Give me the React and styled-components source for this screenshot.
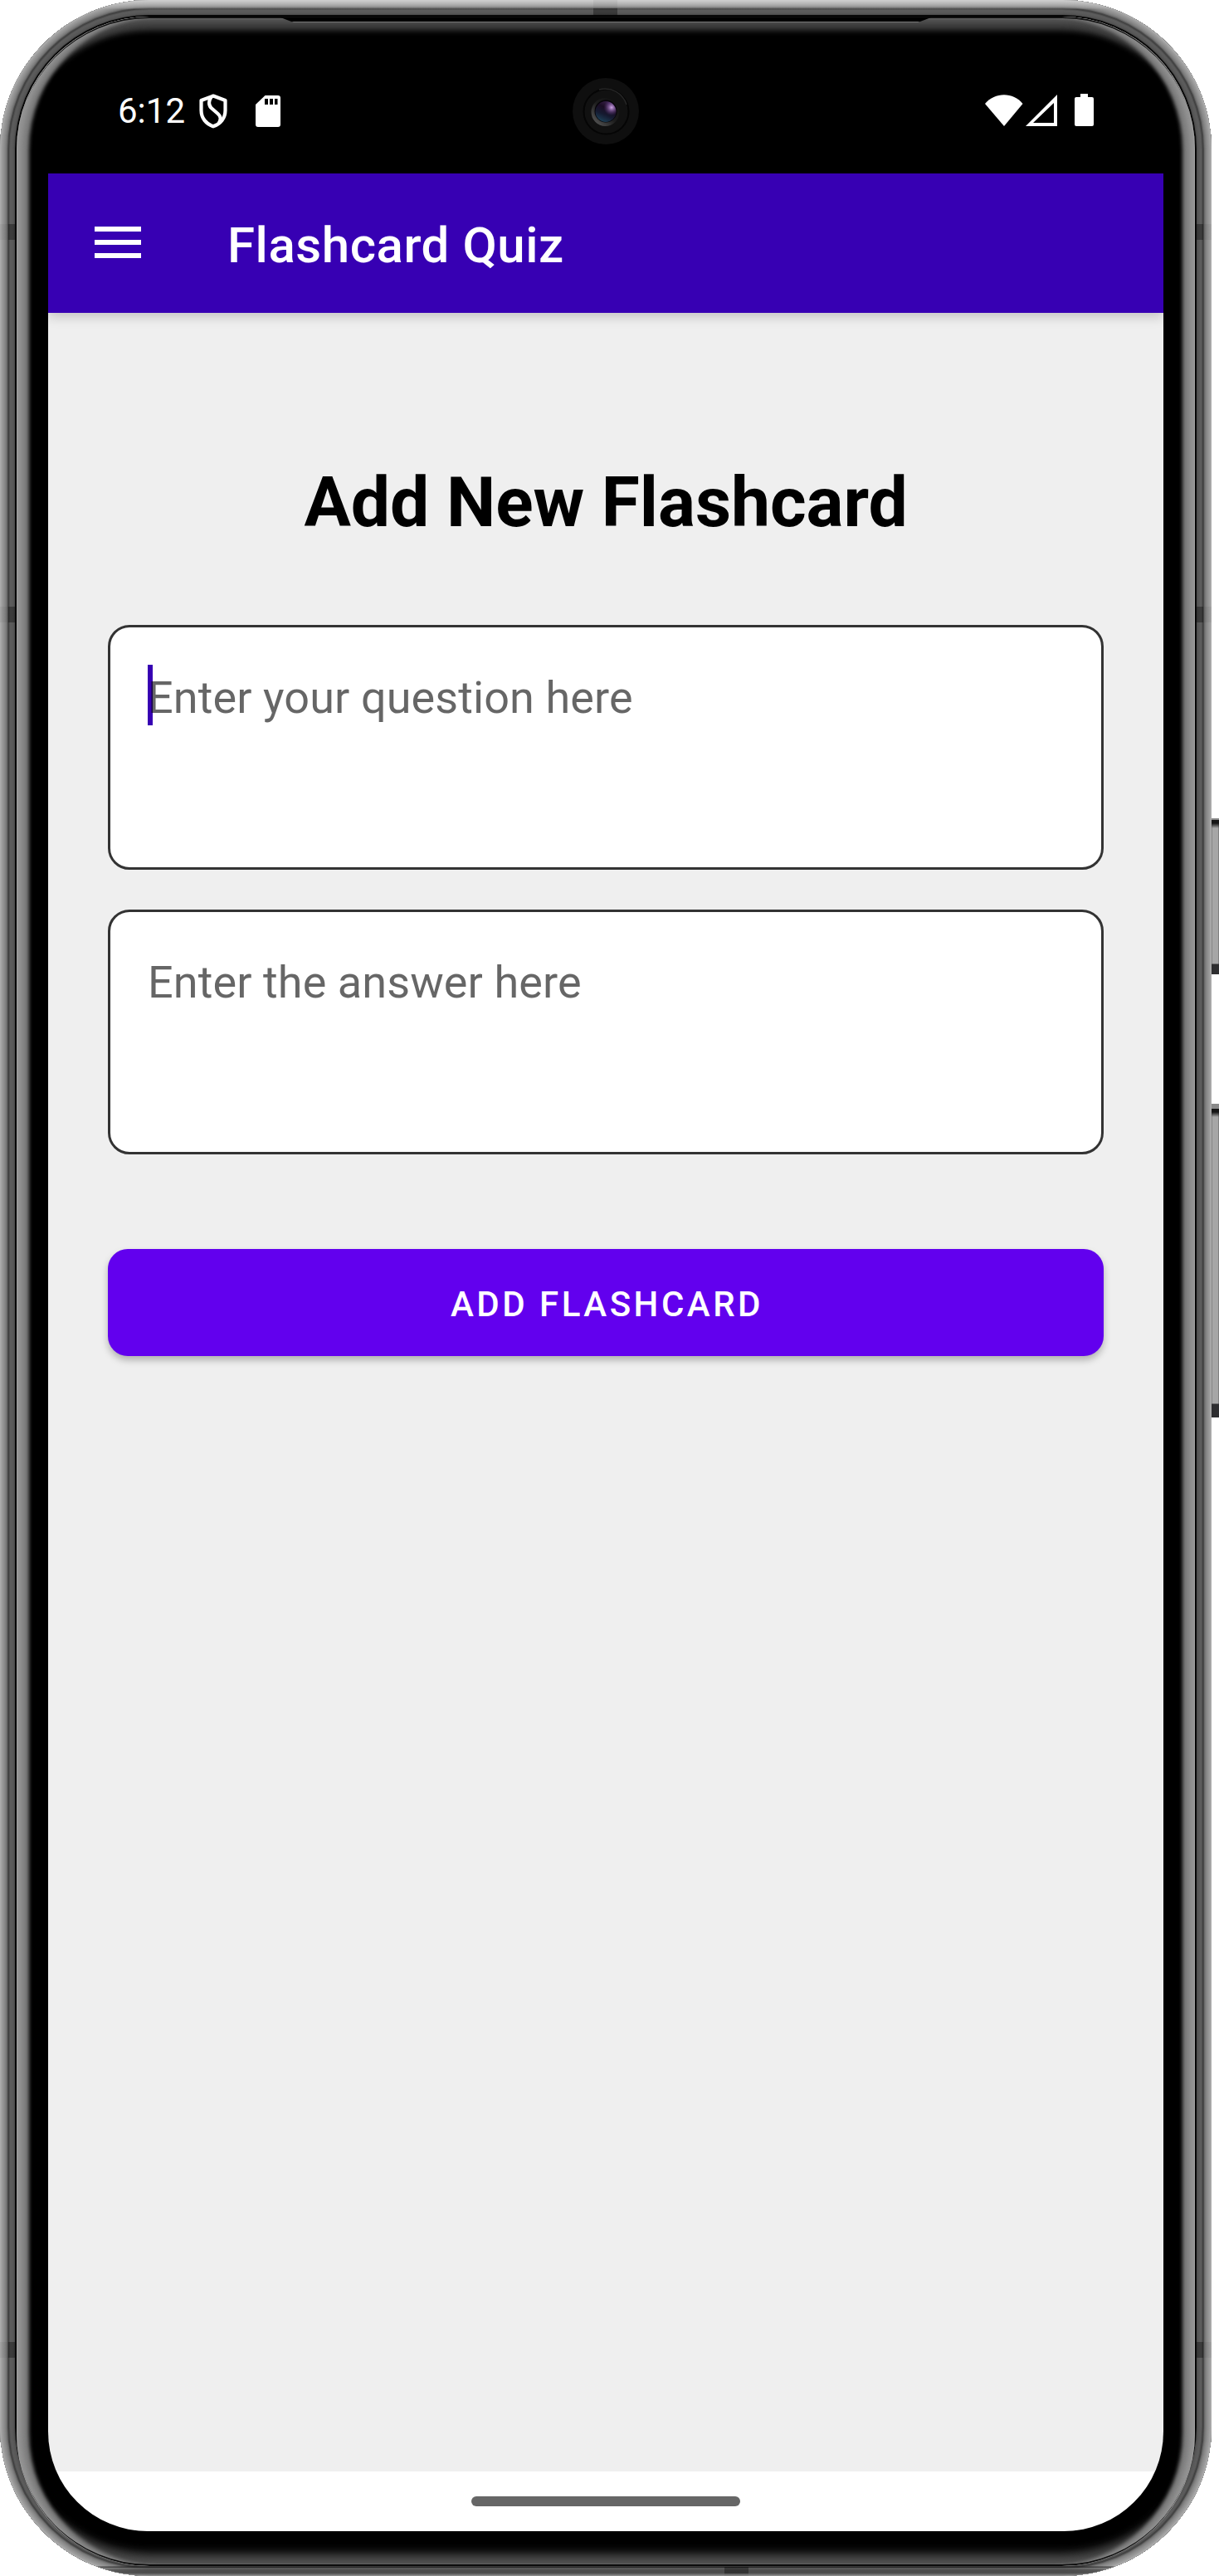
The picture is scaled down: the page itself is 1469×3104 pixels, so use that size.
import React from "react";
import styled, { createGlobalStyle } from "styled-components";

const Global = createGlobalStyle`
  * { box-sizing: border-box; }
  html, body { margin: 0; padding: 0; background: #fff; }
  body { font-family: Roboto, "Noto Sans", sans-serif; overflow: hidden; }
`;

/* Metal frame, one colour per pixel from the outer edge inwards */
const RIM = [
  "#acacac", "#a4a4a4", "#9c9c9c", "#969696", "#909090", "#8a8a8a", "#828282", "#787878", "#6a6a6a",
  "#4a4a4a", "#404040", "#525252", "#5c5c5c", "#5c5c5c", "#5a5a5a", "#585858", "#545454", "#4c4c4c",
  "#0a0a0a", "#000000",
];
const rimShadow = RIM.map((c, i) => `inset 0 0 0 ${i + 1}px ${c}`).join(", ");

const Stage = styled.div`
  display: flex;
  width: 1469px;
  height: 3104px;
  overflow: hidden;
  background: #fff;
`;

const Phone = styled.div`
  position: relative;
  display: flex;
  flex: none;
  width: 1460px;
  height: 3104px;
  padding: 20px 20px 12px;
  border-radius: 180px;
  background: #000;
  box-shadow: ${rimShadow};
`;

const FrameSheen = styled.div`
  position: absolute;
  inset: 0;
  border-radius: 180px;
  background:
    linear-gradient(180deg, rgba(215, 215, 215, 0.8) 0, rgba(180, 180, 180, 0.35) 10px, transparent 11px),
    linear-gradient(0deg, rgba(60, 60, 60, 0.2) 0, rgba(50, 50, 50, 0.75) 4px, rgba(50, 50, 50, 0.6) 8px, rgba(120, 120, 120, 0.5) 9px, rgba(0, 0, 0, 0.6) 11px, transparent 12px);
  pointer-events: none;
`;

const Bezel = styled.div`
  display: flex;
  flex: 1;
  padding: 38px 38px 42px;
  border-radius: 160px;
  background: #000;
  box-shadow:
    inset 1px 0 0 0 #a0a0a0,
    inset -1px 0 0 0 #a0a0a0,
    inset 0 2px 0 0 #101010,
    inset 0 -2px 0 0 #0c0c0c,
    inset 9px 0 6px -2px #949494,
    inset -9px 0 6px -2px #949494,
    inset 16px 0 4px -1px #7a7a7a,
    inset -16px 0 4px -1px #7a7a7a,
    inset 0 10px 8px -3px #5a5a5a,
    inset 0 19px 6px -2px #383838,
    inset 0 -14px 10px -4px #525252,
    inset 0 -22px 10px -4px #2a2a2a;
`;

const Screen = styled.div`
  display: flex;
  flex-direction: column;
  flex: 1;
  overflow: hidden;
  border-radius: 120px;
  background: #000;
`;

const EarSlit = styled.div`
  position: absolute;
  top: 21px;
  left: 338px;
  width: 784px;
  height: 6px;
  background: #000;
  border-bottom: 1px solid #777;
  clip-path: polygon(0 0, 100% 0, 98% 100%, 2% 100%);
`;

const bandAngle = { left: "90deg", right: "270deg", top: "180deg", bottom: "0deg" };

const AntennaBand = styled.div`
  position: absolute;
  ${(p) => p.$edge}: 0;
  ${(p) => (p.$edge === "left" || p.$edge === "right" ? "top" : "left")}: ${(p) => p.$at}px;
  width: ${(p) => (p.$edge === "left" || p.$edge === "right" ? 18 : 29)}px;
  height: ${(p) => (p.$edge === "bottom" ? 11 : 19)}px;
  background: linear-gradient(
    ${(p) => bandAngle[p.$edge]},
    rgba(0, 0, 0, 0.05) 0 ${(p) => (p.$edge === "bottom" ? 3 : 10)}px,
    rgba(0, 0, 0, 0.35) ${(p) => (p.$edge === "bottom" ? 3 : 10)}px
  );
`;

const SideKeys = styled.div`
  display: flex;
  flex-direction: column;
  width: 9px;
  padding-top: 986px;
  gap: 156px;
`;

const Key = styled.div`
  flex: none;
  height: ${(p) => p.$h}px;
  background:
    linear-gradient(180deg, #8a8a8a 0 ${(p) => p.$lip}px, #151515 ${(p) => p.$lip}px ${(p) => p.$lip + 4}px, transparent ${(p) => p.$lip + 10}px calc(100% - ${(p) => p.$foot + 1}px), #2e2e30 calc(100% - ${(p) => p.$foot}px)),
    linear-gradient(90deg, #858585 0 1px, #a6a6a6 1px 8px, #808080 8px);
`;

const StatusBar = styled.div`
  display: flex;
  align-items: center;
  justify-content: space-between;
  flex: none;
  height: 151px;
  padding: 0 84px;
  background: #000;
  color: #fff;
`;

const StatusLeft = styled.div`
  display: flex;
  align-items: center;
  width: 260px;
`;

const Clock = styled.span`
  width: 98px;
  font-size: 42px;
  line-height: 50px;
  white-space: nowrap;
`;

const StatusRight = styled.div`
  display: flex;
  justify-content: flex-end;
  align-items: center;
  width: 260px;
  margin-bottom: 2px;
`;

const StatusIcon = styled.svg`
  display: block;
  flex: none;
  margin-left: ${(p) => p.$ml || 0}px;
`;

const AppBar = styled.header`
  display: flex;
  align-items: center;
  flex: none;
  z-index: 1;
  height: 168px;
  padding-left: 56px;
  background: #3700b3;
  box-shadow: 0 4px 14px rgba(0, 0, 0, 0.2);
`;

const MenuButton = styled.button`
  display: flex;
  flex-direction: column;
  gap: 10px;
  width: 56px;
  margin: 0 104px 2px 0;
  padding: 0;
  border: 0;
  background: none;
`;

const MenuLine = styled.span`
  height: 6px;
  background: #fff;
`;

const AppTitle = styled.h1`
  margin: 5px 0 0;
  color: #fff;
  font-size: 60px;
  line-height: 70px;
  font-weight: 500;
  letter-spacing: 0.55px;
`;

const Content = styled.main`
  display: flex;
  flex-direction: column;
  flex: 1;
  padding: 176px 72px 0;
  background: #efefef;
`;

const Heading = styled.h2`
  margin: 0 0 95px;
  text-align: center;
  font-size: 84px;
  line-height: 105px;
  font-weight: 700;
  letter-spacing: -0.08px;
  color: #000;
`;

const Field = styled.div`
  position: relative;
  height: 295px;
  margin-bottom: 48px;
  padding: 53px 45px;
  border: 3px solid #333;
  border-radius: 26px;
  background: #fff;
  font-size: 54px;
  line-height: 63px;
  letter-spacing: 0.09px;
`;

const Caret = styled.span`
  position: absolute;
  left: 45px;
  top: 45px;
  width: 6px;
  height: 73px;
  background: #3700b3;
`;

const Hint = styled.span`
  position: relative;
  color: rgba(0, 0, 0, 0.6);
`;

const SubmitButton = styled.button`
  height: 129px;
  margin: 66px 0 0;
  padding: 4px 0 0 3px;
  border: 0;
  border-radius: 24px;
  background: #6200ee;
  box-shadow: 0 5px 8px rgba(0, 0, 0, 0.26);
  color: #fff;
  font: 500 42px/50px Roboto, sans-serif;
  letter-spacing: 3.5px;
`;

const NavBar = styled.div`
  display: flex;
  align-items: center;
  justify-content: center;
  flex: none;
  height: 72px;
  background: #fff;
`;

const HomeHandle = styled.div`
  width: 324px;
  height: 12px;
  border-radius: 6px;
  background: #666;
`;

const Camera = () => (
  <svg width="80" height="80" viewBox="0 0 80 80">
    <defs>
      <linearGradient id="ring" x1="0" y1="1" x2="1" y2="0">
        <stop offset="0" stopColor="#626262" />
        <stop offset="0.5" stopColor="#1d1d1d" />
        <stop offset="1" stopColor="#0c0c0c" />
      </linearGradient>
      <linearGradient id="lens" x1="0.3" y1="1" x2="0.75" y2="0">
        <stop offset="0" stopColor="#1d4258" />
        <stop offset="0.35" stopColor="#151a30" />
        <stop offset="0.65" stopColor="#1b0d24" />
        <stop offset="1" stopColor="#3c2350" />
      </linearGradient>
      <radialGradient id="glint" cx="0.78" cy="0.3" r="0.38">
        <stop offset="0" stopColor="#d0a6e8" />
        <stop offset="1" stopColor="#6a3d90" stopOpacity="0" />
      </radialGradient>
    </defs>
    <circle cx="40" cy="40" r="40" fill="#0f0f0f" />
    <circle cx="40.5" cy="40.5" r="27" fill="#111" stroke="#050505" strokeWidth="2" />
    <path d="M32 14a27 27 0 0 1 33 18" fill="none" stroke="#262626" strokeWidth="1.5" />
    <circle cx="39.5" cy="41" r="17" fill="url(#ring)" />
    <circle cx="40" cy="40" r="13.5" fill="#050308" />
    <circle cx="40" cy="40.5" r="12.5" fill="url(#lens)" />
    <circle cx="40" cy="40.5" r="12.5" fill="url(#glint)" />
  </svg>
);

export default function App() {
  return (
    <Stage>
      <Global />
      <Phone>
        <FrameSheen />
        <Bezel>
          <Screen>
            <StatusBar>
              <StatusLeft>
                <Clock>6:12</Clock>
                <StatusIcon width="34" height="42" viewBox="0 0 34 42" fill="none" stroke="#fff" strokeWidth="4.2" strokeLinejoin="round">
                  <path d="M17 2.500 31.500 8v12c0 9.500-6 16.500-14.500 19.300C8.500 36.500 2.500 29.500 2.500 20V8Z" />
                  <path d="M14.500 4c-3 4-3.500 9.500 0 13l8 7c4 3.500 4 7 1 12" />
                </StatusIcon>
                <StatusIcon $ml={34} width="30" height="38" viewBox="0 0 30 38">
                  <path d="M11.500 0H27a3 3 0 0 1 3 3v32a3 3 0 0 1-3 3H3a3 3 0 0 1-3-3V11Z" fill="#fff" />
                  <path d="M11 4h4v7h-4zM17 4h4v7h-4zM23 4h3.500v7H23z" fill="#000" />
                </StatusIcon>
              </StatusLeft>
              <Camera />
              <StatusRight>
                <StatusIcon width="46" height="38" viewBox="0 0 46 38">
                  <path d="M0 11C12-3.300 34-3.300 45.500 11L23 38Z" fill="#fff" />
                </StatusIcon>
                <StatusIcon $ml={3} width="38" height="38" viewBox="0 0 38 38">
                  <path fillRule="evenodd" d="M38 0v38H0ZM34 10 9 34h25Z" fill="#fff" />
                </StatusIcon>
                <StatusIcon $ml={21} width="23" height="39" viewBox="0 0 23 39">
                  <path d="M7 0h9v4h5a2 2 0 0 1 2 2v31a2 2 0 0 1-2 2H2a2 2 0 0 1-2-2V6a2 2 0 0 1 2-2h5Z" fill="#fff" />
                </StatusIcon>
              </StatusRight>
            </StatusBar>
            <AppBar>
              <MenuButton aria-label="Menu">
                <MenuLine />
                <MenuLine />
                <MenuLine />
              </MenuButton>
              <AppTitle>Flashcard Quiz</AppTitle>
            </AppBar>
            <Content>
              <Heading>Add New Flashcard</Heading>
              <Field>
                <Caret />
                <Hint>Enter your question here</Hint>
              </Field>
              <Field>
                <Hint>Enter the answer here</Hint>
              </Field>
              <SubmitButton>ADD FLASHCARD</SubmitButton>
            </Content>
            <NavBar>
              <HomeHandle />
            </NavBar>
          </Screen>
        </Bezel>
        <EarSlit />
        <AntennaBand $edge="top" $at={715} />
        <AntennaBand $edge="bottom" $at={873} />
        <AntennaBand $edge="left" $at={270} />
        <AntennaBand $edge="left" $at={731} />
        <AntennaBand $edge="left" $at={2822} />
        <AntennaBand $edge="right" $at={270} />
        <AntennaBand $edge="right" $at={731} />
        <AntennaBand $edge="right" $at={2822} />
      </Phone>
      <SideKeys>
        <Key $h={188} $lip={2} $foot={12} />
        <Key $h={378} $lip={6} $foot={16} />
      </SideKeys>
    </Stage>
  );
}
